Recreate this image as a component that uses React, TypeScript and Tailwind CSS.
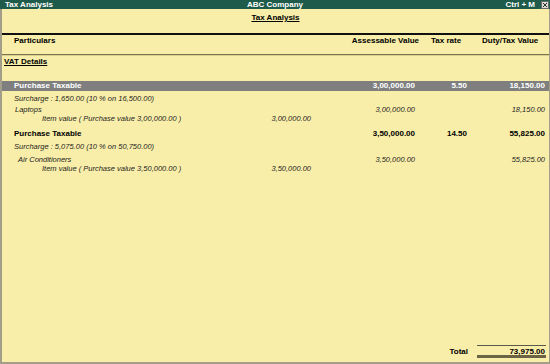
import React from "react";

type RowProps = {
  label: React.ReactNode;
  pl: string;
  c2?: string;
  c3?: string;
  c4?: string;
  c5?: string;
  cls?: string;
  h?: string;
};

function Row({ label, pl, c2, c3, c4, c5, cls = "", h = "h-[9px] leading-[9px]" }: RowProps) {
  return (
    <div className={`flex items-center pr-[4px] ${h} ${cls}`}>
      <div className={`flex-1 whitespace-nowrap ${pl}`}>{label}</div>
      <div className="w-[80px] text-right whitespace-nowrap">{c2}</div>
      <div className="w-[104px] text-right whitespace-nowrap">{c3}</div>
      <div className="w-[52px] text-right whitespace-nowrap">{c4}</div>
      <div className="w-[78px] text-right whitespace-nowrap">{c5}</div>
    </div>
  );
}

export default function App() {
  return (
    <div className="w-[550px] h-[364px] flex flex-col bg-[#f8eea9] font-['Liberation_Sans',Arial,sans-serif] text-black overflow-hidden">
      {/* Title bar */}
      <div className="h-[9px] bg-[#1e5b4a] text-white font-bold text-[8px] leading-[9px] grid grid-cols-[1fr_auto_1fr] items-center">
        <div className="pl-[5px]">Tax Analysis</div>
        <div>ABC Company</div>
        <div className="flex justify-end items-center">
          <span>Ctrl + M</span>
          <span className="ml-[6px] mr-[1px] w-[8px] h-[8px] bg-[#d8d8d0] border border-[#6a6a6a] flex items-center justify-center">
            <svg width="6" height="6" viewBox="0 0 6 6">
              <path d="M1 1 L5 5 M5 1 L1 5" stroke="#333" strokeWidth="1" />
            </svg>
          </span>
        </div>
      </div>

      {/* Body */}
      <div className="flex-1 flex flex-col border-l-2 border-r border-b-2 border-[#a29e8a]">
        <div className="mt-[4px] h-[10px] leading-[10px] text-center font-bold text-[8px]">
          <span className="underline underline-offset-[1px]">Tax Analysis</span>
        </div>

        <div className="mt-[10px] h-[2px] bg-[#111]" />

        {/* Header row */}
        <div className="flex items-center h-[9px] leading-[9px] mt-[1px] font-bold text-[8px]">
          <div className="flex-1 pl-[12px]">Particulars</div>
          <div className="w-[80px] text-right whitespace-nowrap">Assessable Value</div>
          <div className="w-[63px] pl-[12px] whitespace-nowrap">Tax rate</div>
          <div className="w-[67px] whitespace-nowrap">Duty/Tax Value</div>
        </div>

        <div className="mt-[9px] h-[1px] bg-[#7a7350]" />
        <div className="h-[1px] bg-[#d9cf90]" />

        <div className="mt-[1px] h-[10px] leading-[10px] font-bold text-[8px] pl-[2px]">
          <span className="underline underline-offset-[1px]">VAT Details</span>
        </div>

        {/* Highlighted row */}
        <Row
          h="h-[10px] leading-[10px]"
          cls="mt-[14px] bg-[#7f7f7f] text-white font-bold text-[8px]"
          pl="pl-[12px]"
          label="Purchase Taxable"
          c3="3,00,000.00"
          c4="5.50"
          c5="18,150.00"
        />

        <div className="mt-[3px] h-[10px] leading-[10px] italic text-[7.5px] text-[#1c1c1c] pl-[12px]">
          Surcharge : 1,650.00 (10 % on 16,500.00)
        </div>
        <Row
          cls="mt-[1px] italic text-[7.5px] text-[#1c1c1c]"
          pl="pl-[13px]"
          label="Laptops"
          c3="3,00,000.00"
          c5="18,150.00"
        />
        <Row
          cls="italic text-[7.5px] text-[#1c1c1c]"
          pl="pl-[40px]"
          label="Item value ( Purchase value 3,00,000.00 )"
          c2="3,00,000.00"
        />

        <Row
          h="h-[10px] leading-[10px]"
          cls="mt-[6px] font-bold text-[8px]"
          pl="pl-[12px]"
          label="Purchase Taxable"
          c3="3,50,000.00"
          c4="14.50"
          c5="55,825.00"
        />
        <div className="mt-[3px] h-[9px] leading-[9px] italic text-[7.5px] text-[#1c1c1c] pl-[12px]">
          Surcharge : 5,075.00 (10 % on 50,750.00)
        </div>
        <Row
          cls="mt-[4px] italic text-[7.5px] text-[#1c1c1c]"
          pl="pl-[16px]"
          label="Air Conditioners"
          c3="3,50,000.00"
          c5="55,825.00"
        />
        <Row
          cls="italic text-[7.5px] text-[#1c1c1c]"
          pl="pl-[40px]"
          label="Item value ( Purchase value 3,50,000.00 )"
          c2="3,50,000.00"
        />

        <div className="flex-1" />

        {/* Total */}
        <div className="flex justify-end items-center pr-[3px] mb-[4px] font-bold text-[8px]">
          <span className="mr-[9px]">Total</span>
          <div className="w-[69px] text-right pr-[1px] h-[13px] leading-[10px] pt-[1px] border-t border-t-[#5a5a4a] border-b-[3px] border-b-[#6b6444]">
            73,975.00
          </div>
        </div>
      </div>
    </div>
  );
}
